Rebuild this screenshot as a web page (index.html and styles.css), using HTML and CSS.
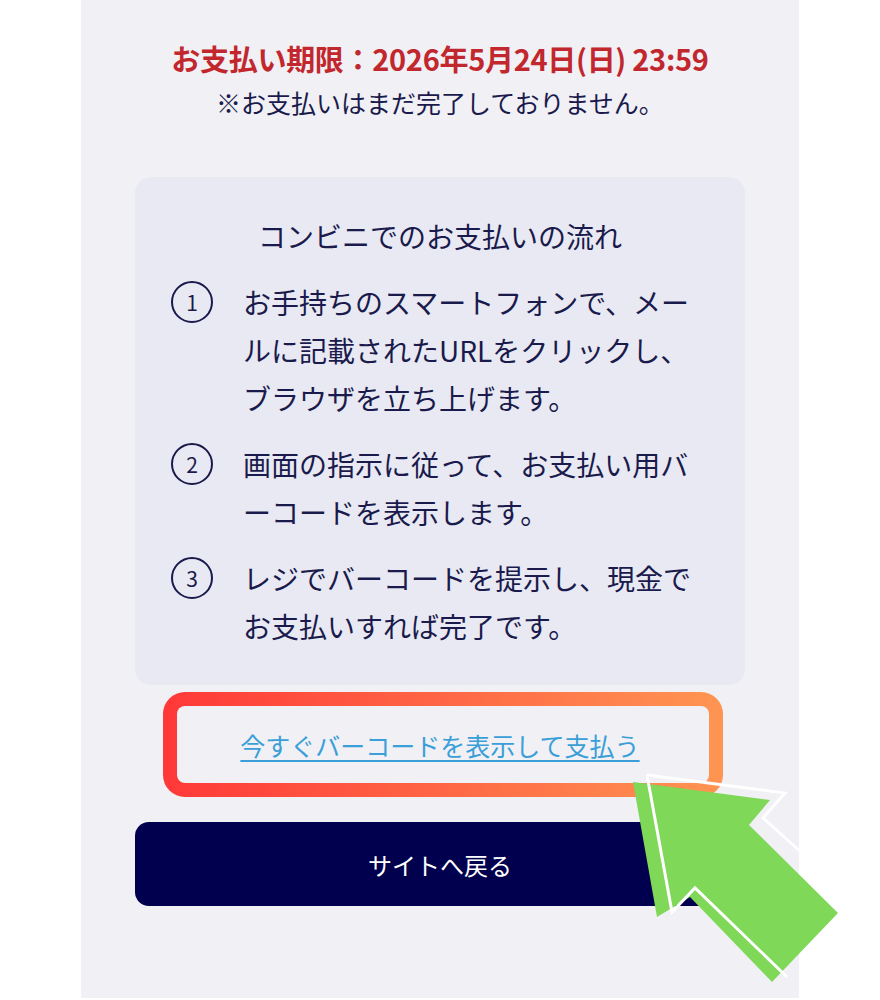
FILE: index.html
```html
<!DOCTYPE html>
<html lang="ja">
<head>
    <meta charset="UTF-8">
    <meta name="viewport" content="width=device-width, initial-scale=1.0">
    <title>コンビニでのお支払い</title>
    <link rel="stylesheet" href="styles.css">
</head>
<body>

    <div class="pay-page">
        <p class="deadline">お支払い期限：2026年5月24日(日) 23:59</p>
        <p class="notice">※お支払いはまだ完了しておりません。</p>

        <!-- お支払いの流れ -->
        <div class="flow-card">
            <h2>コンビニでのお支払いの流れ</h2>
            <ol class="flow-list">
                <li class="flow-item">
                    <span class="step-no">1</span>
                    <span class="step-text">お手持ちのスマートフォンで、メールに記載されたURLをクリックし、ブラウザを立ち上げます。</span>
                </li>
                <li class="flow-item">
                    <span class="step-no">2</span>
                    <span class="step-text">画面の指示に従って、お支払い用バーコードを表示します。</span>
                </li>
                <li class="flow-item">
                    <span class="step-no">3</span>
                    <span class="step-text">レジでバーコードを提示し、現金でお支払いすれば完了です。</span>
                </li>
            </ol>
        </div>

        <!-- バーコード表示リンク -->
        <div class="barcode-box">
            <a href="#" class="barcode-link">今すぐバーコードを表示して支払う</a>
        </div>

        <button class="back-btn">サイトへ戻る</button>
    </div>

    <!-- 案内の矢印 -->
    <svg class="pointer-arrow" width="880" height="1000" viewBox="0 0 880 1000">
        <polygon points="633,782 770,800 749,825 838,913 772,982 690,897 657,917" fill="#7fd858"/>
        <polyline points="647,775 785,793 763,818 860,905" fill="none" stroke="#fff" stroke-width="3"/>
        <polyline points="787,977 695,888 672,912 647,775" fill="none" stroke="#fff" stroke-width="3"/>
    </svg>

</body>
</html>
```

FILE: styles.css
```css
/* Reset */
* {
    margin: 0;
    padding: 0;
    box-sizing: border-box;
}

body {
    font-family: "Noto Sans CJK JP", "Noto Sans", sans-serif;
    background-color: #fff;
    color: #1a1a4c;
    position: relative;
    width: 880px;
    height: 1000px;
    overflow: hidden;
}

/* 中央のカラム */
.pay-page {
    width: 718px;
    height: 998px;
    margin-left: 81px;
    padding: 36px 54px 0;
    background-color: #f0f0f5;
}

.deadline {
    text-align: center;
    font-size: 29px;
    font-weight: bold;
    line-height: 44px;
    color: #c1272d;
    letter-spacing: -0.3px;
}

.notice {
    text-align: center;
    font-size: 25px;
    line-height: 44px;
}

/* 流れのカード */
.flow-card {
    margin-top: 53px;
    padding: 35px 36px 35px;
    background-color: #e8e9f2;
    border-radius: 16px;
}

.flow-card h2 {
    text-align: center;
    font-size: 28px;
    font-weight: normal;
    line-height: 48px;
}

.flow-list {
    list-style: none;
    margin-top: 18px;
    display: flex;
    flex-direction: column;
    gap: 18px;
}

.flow-item {
    display: flex;
    align-items: flex-start;
    gap: 30px;
}

.step-no {
    flex: none;
    width: 42px;
    height: 42px;
    margin-top: 3px;
    border: 2px solid #1a1a4c;
    border-radius: 50%;
    display: flex;
    align-items: center;
    justify-content: center;
    font-size: 21px;
    line-height: 1;
}

.step-text {
    flex: 1;
    font-size: 28px;
    line-height: 48px;
    line-break: normal;
}

/* バーコードリンク */
.barcode-box {
    width: 560px;
    height: 105px;
    margin: 7px 0 0 28px;
    border: 14px solid transparent;
    border-radius: 22px;
    background:
        linear-gradient(#f0f0f5, #f0f0f5) padding-box,
        linear-gradient(90deg, #ff3838, #ff9552) border-box;
    display: flex;
    align-items: center;
    justify-content: center;
}

.barcode-link {
    margin-right: 6px;
    font-size: 25px;
    color: #3a9fd8;
    text-decoration: underline;
    text-underline-offset: 4px;
}

/* 戻るボタン */
.back-btn {
    display: block;
    width: 100%;
    height: 84px;
    margin-top: 25px;
    border: none;
    border-radius: 14px;
    background-color: #00004e;
    color: #fff;
    font-family: inherit;
    font-size: 24px;
    cursor: pointer;
}

.pointer-arrow {
    position: absolute;
    top: 0;
    left: 0;
    pointer-events: none;
}
```
